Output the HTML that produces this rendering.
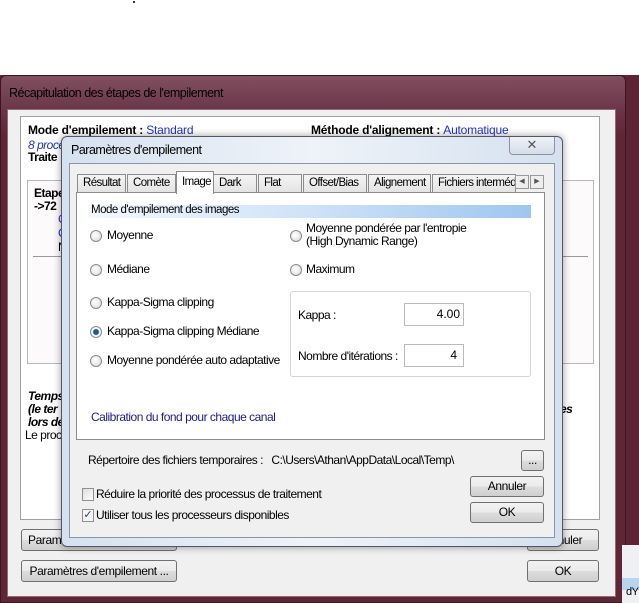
<!DOCTYPE html>
<html><head><meta charset="utf-8"><style>
*{box-sizing:border-box}
body{margin:0;width:639px;height:603px;background:#fff;position:relative;overflow:hidden;font-family:"Liberation Sans",sans-serif;font-size:11.5px;color:#000}
.a{position:absolute}
.btn{position:absolute;border:1px solid #707070;border-radius:3px;background:linear-gradient(#f2f2f2,#ebebeb 50%,#dddddd 51%,#cfcfcf);text-align:center;font-size:12px;letter-spacing:-0.4px}
.rad{position:absolute;width:12px;height:12px;border-radius:50%;border:1px solid #8a8a8a;background:radial-gradient(circle at 40% 40%,#fff,#d8d8d8)}
.lbl{position:absolute;white-space:nowrap;font-size:12px;letter-spacing:-0.5px}
.tab{position:absolute;top:174px;height:19px;border:1px solid #8c8c8c;border-bottom:none;background:linear-gradient(#f4f4f4,#e3e3e3);font-size:11.5px;line-height:17px;padding-left:5px;letter-spacing:-0.6px;white-space:nowrap;overflow:hidden}
</style></head><body>
<div class="a" style="left:133px;top:1px;width:2px;height:2px;background:#335"></div>
<div class="a" style="left:0;top:75px;width:639px;height:470px;background:#5e2334"></div>
<div class="a" style="left:0;top:75px;width:626px;height:528px;border-radius:6px 6px 0 0;background:linear-gradient(#80505f,#6a3548 35px,#5f2636 60px);border:1px solid #3d1522"></div>
<div class="a" style="left:622px;top:545px;width:17px;height:58px;background:#eef0f3"></div>
<div class="a" style="left:622px;top:578px;width:17px;height:12px;background:#b8d4ee"></div>
<div class="lbl" style="left:626px;top:586px;font-size:11px">dY</div>
<div class="lbl" style="left:9px;top:86px;font-size:12.5px">Récapitulation des étapes de l'empilement</div>
<div class="a" style="left:7px;top:109px;width:609px;height:488px;background:#f0f0f0;border:1px solid #8d6b77"></div>
<div class="a" style="left:20px;top:116px;width:580px;height:404px;background:#fff;border:1px solid #a0a0a0"></div>
<div class="lbl" style="left:28px;top:123px;font-weight:bold;letter-spacing:-0.2px">Mode d'empilement : <span style="font-weight:normal;color:#2233cc">Standard</span></div>
<div class="lbl" style="left:311px;top:123px;font-weight:bold;letter-spacing:-0.2px">Méthode d'alignement : <span style="font-weight:normal;color:#2233cc">Automatique</span></div>
<div class="lbl" style="left:28px;top:138px;font-style:italic;color:#2233aa">8 proce</div>
<div class="lbl" style="left:28px;top:150px;font-weight:bold">Traite</div>
<div class="a" style="left:27px;top:180px;width:567px;height:184px;border:1px solid #b8b8b8;background:#fdfafb"></div>
<div class="lbl" style="left:34px;top:186px;font-weight:bold">Etape</div>
<div class="lbl" style="left:34px;top:199px;font-weight:bold">-&gt;72</div>
<div class="lbl" style="left:58px;top:212px;color:#2233cc">C</div>
<div class="lbl" style="left:58px;top:226px;color:#2233cc">C</div>
<div class="lbl" style="left:58px;top:240px">N</div>
<div class="a" style="left:33px;top:256px;width:555px;height:1px;background:#999"></div>
<div class="lbl" style="left:28px;top:389px;font-weight:bold;font-style:italic">Temps</div>
<div class="lbl" style="left:28px;top:402px;font-weight:bold;font-style:italic">(le ter</div>
<div class="lbl" style="left:28px;top:415px;font-weight:bold;font-style:italic">lors de</div>
<div class="lbl" style="left:560px;top:402px;font-weight:bold;font-style:italic">es</div>
<div class="lbl" style="left:25px;top:428px">Le proc</div>
<div class="btn" style="left:21px;top:529px;width:156px;height:22px;line-height:20px;text-align:left;padding-left:6px">Paramètres Alignement...</div>
<div class="btn" style="left:527px;top:529px;width:72px;height:22px;line-height:20px">Annuler</div>
<div class="btn" style="left:21px;top:560px;width:156px;height:22px;line-height:20px">Paramètres d'empilement ...</div>
<div class="btn" style="left:527px;top:560px;width:72px;height:22px;line-height:20px">OK</div>
<!-- dialog -->
<div class="a" style="left:61px;top:136px;width:502px;height:411px;border-radius:6px;background:linear-gradient(90deg,#d5e1ef,#eef3f9 50%,#d5e1ef);border:1px solid #556;box-shadow:0 0 8px rgba(0,0,0,.4)"></div>
<div class="lbl" style="left:71px;top:143px;font-size:12.5px">Paramètres d'empilement</div>
<div class="a" style="left:509px;top:137px;width:46px;height:18px;border:1px solid #8a93a3;border-top:none;border-radius:0 0 4px 4px;background:linear-gradient(#eef2f8,#d6dde8);text-align:center;font-size:13px;line-height:16px;color:#555">✕</div>
<div class="a" style="left:69px;top:163px;width:486px;height:375px;background:#f0f0f0;border:1px solid #8a96a6"></div>
<div class="tab" style="left:77px;width:49px">Résultat</div>
<div class="tab" style="left:127px;width:49px">Comète</div>
<div class="tab" style="left:213px;width:44px">Dark</div>
<div class="tab" style="left:258px;width:44px">Flat</div>
<div class="tab" style="left:303px;width:64px">Offset/Bias</div>
<div class="tab" style="left:368px;width:63px">Alignement</div>
<div class="tab" style="left:432px;width:84px">Fichiers interméd</div>
<div class="a" style="left:515px;top:175px;width:14px;height:14px;border:1px solid #999;background:#eee;font-size:7px;line-height:12px;text-align:center;color:#555">◀</div>
<div class="a" style="left:530px;top:175px;width:14px;height:14px;border:1px solid #999;background:#eee;font-size:7px;line-height:12px;text-align:center;color:#555">▶</div>
<div class="a" style="left:76px;top:192px;width:469px;height:248px;background:#fff;border:1px solid #8c8c8c"></div>
<div class="tab" style="left:176px;top:171px;width:38px;height:23px;background:#fff;border-bottom:none;z-index:2;line-height:20px">Image</div>
<div class="a" style="left:88px;top:205px;width:443px;height:13px;background:linear-gradient(90deg,#f4f8fd,#cfe2f8 50%,#9fc6f0)"></div>
<div class="lbl" style="left:91px;top:204px;font-size:11.5px">Mode d'empilement des images</div>
<div class="rad" style="left:90px;top:230px"></div><div class="lbl" style="left:107px;top:228px">Moyenne</div>
<div class="rad" style="left:90px;top:264px"></div><div class="lbl" style="left:107px;top:262px">Médiane</div>
<div class="rad" style="left:90px;top:297px"></div><div class="lbl" style="left:107px;top:295px">Kappa-Sigma clipping</div>
<div class="rad" style="left:90px;top:326px;background:radial-gradient(circle,#1a5f8f 0 2.5px,#fff 3.5px,#ddd)"></div><div class="lbl" style="left:107px;top:324px">Kappa-Sigma clipping Médiane</div>
<div class="rad" style="left:90px;top:355px"></div><div class="lbl" style="left:107px;top:353px">Moyenne pondérée auto adaptative</div>
<div class="rad" style="left:290px;top:230px"></div><div class="lbl" style="left:306px;top:222px;line-height:13px">Moyenne pondérée par l'entropie<br>(High Dynamic Range)</div>
<div class="rad" style="left:290px;top:264px"></div><div class="lbl" style="left:306px;top:262px">Maximum</div>
<div class="a" style="left:290px;top:291px;width:241px;height:86px;border:1px solid #d5d5d5;border-radius:3px"></div>
<div class="lbl" style="left:298px;top:308px">Kappa :</div>
<div class="a" style="left:404px;top:303px;width:60px;height:23px;border:1px solid #bbb;text-align:right;padding-right:3px;line-height:20px;font-size:12px">4.00</div>
<div class="lbl" style="left:298px;top:349px">Nombre d'itérations :</div>
<div class="a" style="left:404px;top:344px;width:60px;height:23px;border:1px solid #bbb;text-align:right;padding-right:6px;line-height:20px;font-size:12px">4</div>
<div class="lbl" style="left:91px;top:410px;color:#1d1d7a">Calibration du fond pour chaque canal</div>
<div class="lbl" style="left:88px;top:453px">Répertoire des fichiers temporaires :&nbsp;&nbsp; C:\Users\Athan\AppData\Local\Temp\</div>
<div class="btn" style="left:521px;top:450px;width:23px;height:21px;line-height:18px">...</div>
<div class="btn" style="left:470px;top:476px;width:74px;height:21px;line-height:19px">Annuler</div>
<div class="btn" style="left:470px;top:502px;width:74px;height:21px;line-height:19px">OK</div>
<div class="a" style="left:82px;top:488px;width:12px;height:13px;border:1px solid #8f8f8f;background:linear-gradient(135deg,#ddd,#fff)"></div>
<div class="lbl" style="left:96px;top:487px">Réduire la priorité des processus de traitement</div>
<div class="a" style="left:82px;top:509px;width:12px;height:13px;border:1px solid #8f8f8f;background:#f4f4f4;font-size:11px;line-height:11px;text-align:center;color:#2a3a6a">✓</div>
<div class="lbl" style="left:96px;top:508px">Utiliser tous les processeurs disponibles</div>
</body></html>
